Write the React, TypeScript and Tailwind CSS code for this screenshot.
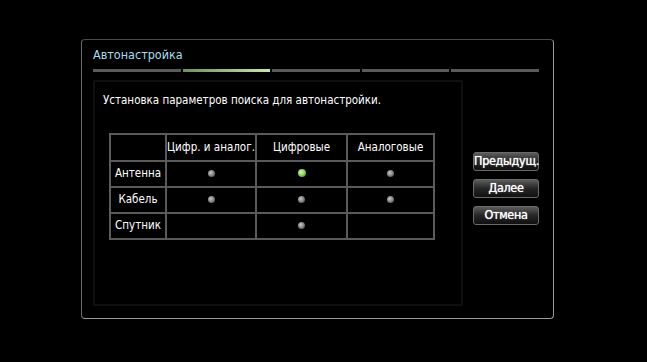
import React from 'react';

const cols = ['Цифр. и аналог.', 'Цифровые', 'Аналоговые'];

const rows: { name: string; dots: (null | 'gray' | 'green')[] }[] = [
  { name: 'Антенна', dots: ['gray', 'green', 'gray'] },
  { name: 'Кабель', dots: ['gray', 'gray', 'gray'] },
  { name: 'Спутник', dots: [null, 'gray', null] },
];

function Dot({ kind }: { kind: 'gray' | 'green' }) {
  return kind === 'green' ? (
    <span className="inline-block w-[8px] h-[8px] rounded-full bg-[radial-gradient(circle_at_40%_40%,#d8ffb0,#7fc84a_55%,#2f5a18)]" />
  ) : (
    <span className="inline-block w-[7px] h-[7px] rounded-full bg-[radial-gradient(circle_at_40%_40%,#c8c8c8,#7a7a7a_55%,#2a2a2a)]" />
  );
}

function TvButton({ label }: { label: string }) {
  return (
    <button className="w-[66px] h-[19px] rounded-[3px] border border-[#6a6a6a] bg-gradient-to-b from-[#5c5c5c] via-[#262626] to-[#101010] text-white text-[12.5px] leading-none tracking-tight [text-shadow:0_0_1px_#fff]">
      {label}
    </button>
  );
}

export default function App() {
  const segments = [false, true, false, false, false];

  return (
    <div
      className="w-[647px] h-[362px] bg-black pl-[81px] pt-[39px]"
      style={{ fontFamily: '"DejaVu Sans Condensed", "DejaVu Sans", sans-serif' }}
    >
      {/* Window */}
      <div className="w-[473px] h-[280px] rounded-[4px] border border-[#9a9a9a] border-t-[#4a4a4a] border-l-[#6a6a6a] bg-black px-[11px] pt-[6px]">
        <div className="text-[12.5px] leading-[18px] text-[#a6dcec]">Автонастройка</div>

        {/* Progress */}
        <div className="flex gap-[2px] mt-[5px] w-[446px]">
          {segments.map((on, i) => (
            <div
              key={i}
              className={
                on
                  ? 'flex-1 h-[3px] bg-gradient-to-r from-[#6f8f5c] to-[#c8e6b0]'
                  : 'flex-1 h-[3px] bg-[#5a5a5a]'
              }
            />
          ))}
        </div>

        <div className="flex mt-[8px]">
          {/* Panel */}
          <div className="w-[370px] h-[226px] border-2 border-[#101010] rounded-[2px] px-[8px] pt-[11px]">
            <div className="text-[11.5px] leading-[14px] text-white">
              Установка параметров поиска для автонастройки.
            </div>

            <table className="mt-[26px] ml-[6px] border-collapse text-white text-[11.5px]">
              <thead>
                <tr className="h-[27px]">
                  <th className="w-[56px] border-2 border-[#5a5a5a]" />
                  {cols.map((c, i) => (
                    <th
                      key={c}
                      className={
                        'border-2 border-[#5a5a5a] font-normal ' +
                        (i === 0 ? 'w-[90px]' : i === 1 ? 'w-[91px]' : 'w-[87px]')
                      }
                    >
                      {c}
                    </th>
                  ))}
                </tr>
              </thead>
              <tbody>
                {rows.map((r) => (
                  <tr key={r.name} className="h-[26px]">
                    <td className="border-2 border-[#5a5a5a] text-center">{r.name}</td>
                    {r.dots.map((d, i) => (
                      <td key={i} className="border-2 border-[#5a5a5a] text-center leading-none">
                        {d && <Dot kind={d} />}
                      </td>
                    ))}
                  </tr>
                ))}
              </tbody>
            </table>
          </div>

          {/* Buttons */}
          <div className="flex flex-col gap-[8px] ml-[10px] mt-[72px]">
            <TvButton label="Предыдущ." />
            <TvButton label="Далее" />
            <TvButton label="Отмена" />
          </div>
        </div>
      </div>
    </div>
  );
}
